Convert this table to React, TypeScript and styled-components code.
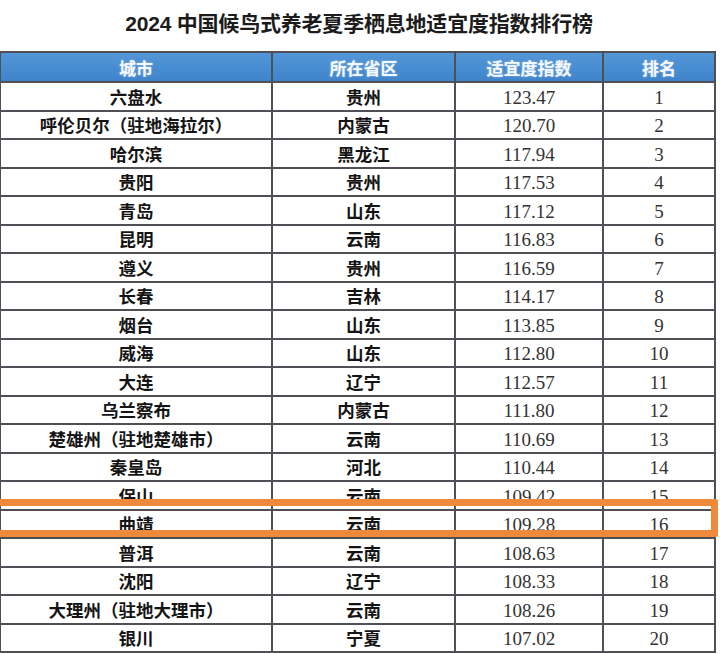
import styled, { createGlobalStyle } from "styled-components"

const GlobalStyle = createGlobalStyle`
  html, body {
    margin: 0;
    padding: 0;
    background: #ffffff;
  }
  body {
    font-family: "Noto Sans CJK SC", "Liberation Sans", sans-serif;
    overflow: hidden;
  }
`

const Page = styled.div`
  position: relative;
  width: 720px;
  height: 654px;
  overflow: hidden;
  background: #fff;
`

const Title = styled.h1`
  margin: 0;
  height: 51px;
  padding-bottom: 7px;
  padding-right: 2px;
  box-sizing: border-box;
  display: flex;
  align-items: center;
  justify-content: center;
  font-family: "Liberation Sans", "Noto Sans CJK SC", sans-serif;
  font-size: 21px;
  font-weight: 700;
  color: #1c1c1c;
  letter-spacing: -0.2px;
`

const Table = styled.table`
  border-collapse: collapse;
  table-layout: fixed;
  margin-left: -1px;
`

const HeadCell = styled.th<{ w: number }>`
  width: ${p => p.w}px;
  height: 28px;
  padding: 0;
  border: 2px solid #4f4f55;
  background: linear-gradient(#5397d8, #3f84cb);
  color: #f4f8ff;
  font-family: "Noto Sans CJK SC", sans-serif;
  font-size: 17px;
  font-weight: 700;
  text-shadow: 0 0 2px rgba(255, 255, 255, 0.5);
  text-align: center;
  vertical-align: middle;
`

const Row = styled.tr`
  height: 28.5px;
`

const NameCell = styled.td`
  padding: 0;
  border: 2px solid #4f4f55;
  text-align: center;
  vertical-align: middle;
  font-family: "Noto Sans CJK SC", sans-serif;
  font-weight: 700;
  font-size: 17.5px;
  color: #141414;
  line-height: 1;
  white-space: nowrap;
`

const NumCell = styled.td`
  padding: 0;
  padding-top: 2px;
  border: 2px solid #4f4f55;
  text-align: center;
  vertical-align: middle;
  font-family: "Liberation Serif", serif;
  font-size: 19px;
  color: #333;
  line-height: 1;
`

const Highlight = styled.div`
  position: absolute;
  left: -12px;
  top: 499px;
  width: 730px;
  height: 38px;
  box-sizing: border-box;
  border: 7px solid #ef8a3d;
  border-radius: 2px;
  pointer-events: none;
`

const rows: [string, string, string, number][] = [
  ["六盘水", "贵州", "123.47", 1],
  ["呼伦贝尔（驻地海拉尔）", "内蒙古", "120.70", 2],
  ["哈尔滨", "黑龙江", "117.94", 3],
  ["贵阳", "贵州", "117.53", 4],
  ["青岛", "山东", "117.12", 5],
  ["昆明", "云南", "116.83", 6],
  ["遵义", "贵州", "116.59", 7],
  ["长春", "吉林", "114.17", 8],
  ["烟台", "山东", "113.85", 9],
  ["威海", "山东", "112.80", 10],
  ["大连", "辽宁", "112.57", 11],
  ["乌兰察布", "内蒙古", "111.80", 12],
  ["楚雄州（驻地楚雄市）", "云南", "110.69", 13],
  ["秦皇岛", "河北", "110.44", 14],
  ["保山", "云南", "109.42", 15],
  ["曲靖", "云南", "109.28", 16],
  ["普洱", "云南", "108.63", 17],
  ["沈阳", "辽宁", "108.33", 18],
  ["大理州（驻地大理市）", "云南", "108.26", 19],
  ["银川", "宁夏", "107.02", 20],
]

export default function App() {
  return (
    <>
      <GlobalStyle />
      <Page>
        <Title>2024 中国候鸟式养老夏季栖息地适宜度指数排行榜</Title>
        <Table>
          <thead>
            <tr>
              <HeadCell w={270}>城市</HeadCell>
              <HeadCell w={181}>所在省区</HeadCell>
              <HeadCell w={146}>适宜度指数</HeadCell>
              <HeadCell w={110}>排名</HeadCell>
            </tr>
          </thead>
          <tbody>
            {rows.map(([city, prov, score, rank]) => (
              <Row key={rank}>
                <NameCell>{city}</NameCell>
                <NameCell>{prov}</NameCell>
                <NumCell>{score}</NumCell>
                <NumCell>{rank}</NumCell>
              </Row>
            ))}
          </tbody>
        </Table>
        <Highlight />
      </Page>
    </>
  )
}
